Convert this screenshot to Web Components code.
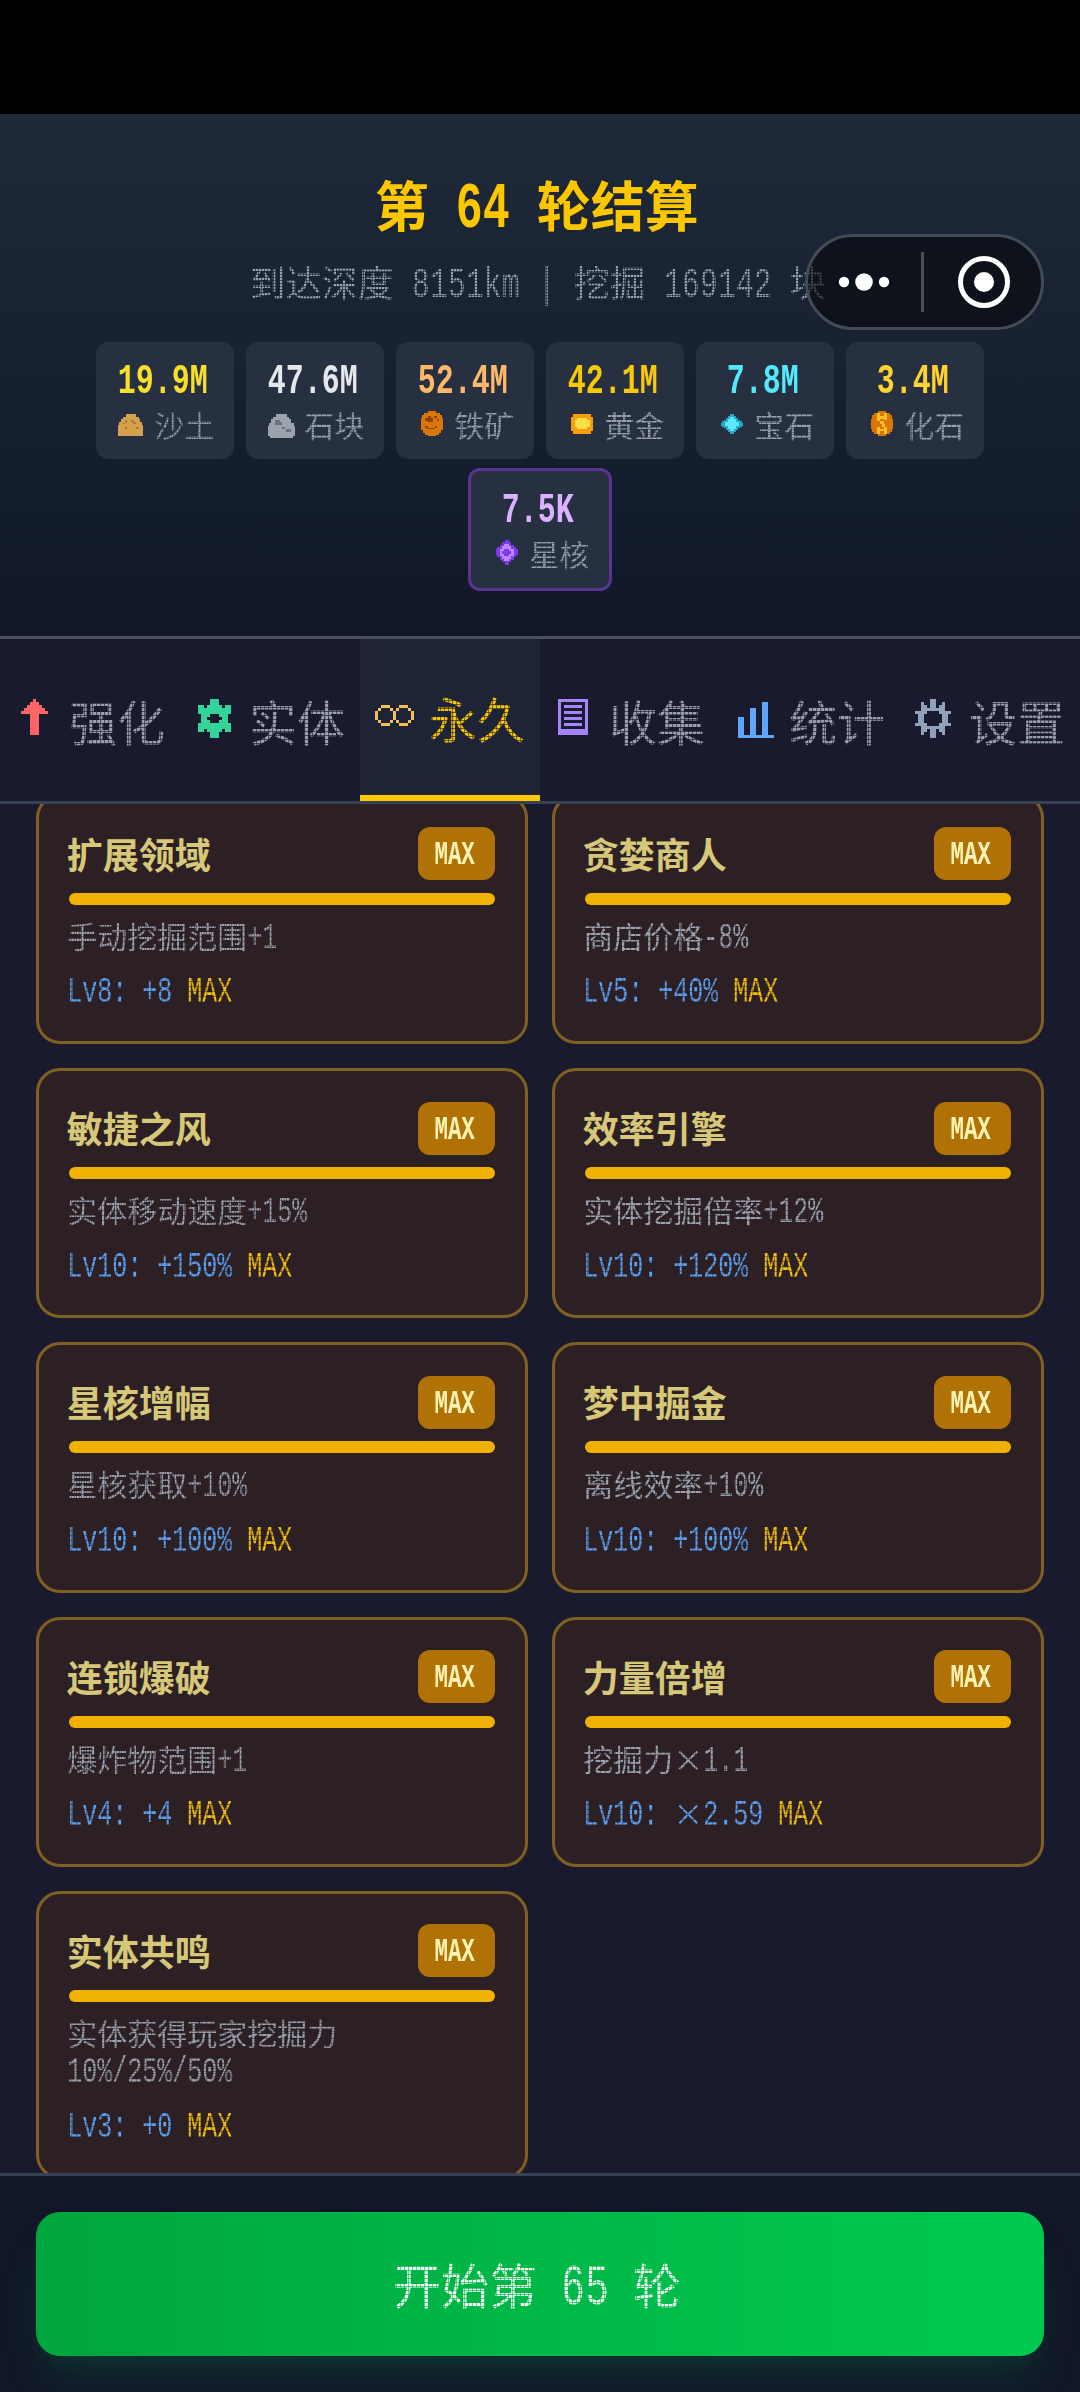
<!DOCTYPE html>
<html lang="zh-CN">
<head>
<meta charset="utf-8">
<title>第 64 轮结算</title>
<style>
html,body{margin:0;padding:0;background:#1a1a2e}
body{width:1080px;height:2392px;overflow:hidden;font-family:"Noto Sans CJK SC",sans-serif;color:#99a1af}
</style>
</head>
<body>
<game-screen></game-screen>
<script>
const define = (name, html) => customElements.define(name, class extends HTMLElement {
  connectedCallback() {
    if (this.shadowRoot) return;
    const root = this.attachShadow({ mode: 'open' });
    root.innerHTML = typeof html === 'function' ? html(this) : html;
  }
});

// Text on a 12-cell grid: Latin runs take half an em per character.
define('px-text', el => {
  const runs = el.getAttribute('text').split(/([\x21-\x7e]+(?: +[\x21-\x7e]+)*)/).filter(Boolean);
  const body = runs.map(r => /[\x21-\x7e]/.test(r)
    ? `<span class="l" style="margin-right:${-r.length * 0.1}em">${r}</span>`
    : r.replace(/ +/g, s => `<i>${s}</i>`).replace('×', '<b>×</b>')).join('');
  return `<style>
    :host{display:block}
    .w{display:block;transform:translate(-.06em,var(--dy,-1px))}
    .l{display:inline-block;font-family:"Liberation Mono",monospace;white-space:pre;line-height:1;transform:scale(.833,1.2);transform-origin:0 77%}
    i{display:inline-block;width:.5em;white-space:pre;font-style:normal}
    b{display:inline-block;width:1em;font-weight:inherit;text-align:center;line-height:1}
    :host([dots]) .w{--g:var(--gap,1px);--c:var(--cell,3px);--o:rgba(0,0,0,var(--floor,.35));
      mask-image:repeating-linear-gradient(90deg,#000 0 calc(var(--c) - var(--g)),var(--o) calc(var(--c) - var(--g)) var(--c)),repeating-linear-gradient(180deg,#000 0 calc(var(--c) - var(--g)),var(--o) calc(var(--c) - var(--g)) var(--c));
      mask-composite:intersect}
  </style><span class="w">${body}</span>`;
});

const rects = (c, list) => `<path fill="${c}" d="${list.map(([x, y, w, h]) => `M${x} ${y}h${w}v${h}h${-w}z`).join('')}"/>`;
const ICONS = {
  sand: rects('#d4a24c', [[36,12,30,8],[28,20,46,8],[20,28,59,8],[16,36,67,8],[12,44,75,34]]) +
    rects('#b07a2b', [[32,30,8,8],[52,30,8,6],[58,36,8,6],[26,38,6,5],[32,50,8,8],[66,50,8,6]]),
  stone: rects('#9ca3af', [[36,12,34,8],[26,20,50,8],[20,28,62,10],[14,38,76,10],[11,48,82,30],[18,76,68,8]]) +
    rects('#6b7280', [[32,30,16,8],[32,36,22,8],[54,50,10,7],[66,58,16,7]]),
  iron: rects('#d97706', [[41,2,26,8],[31,8,46,8],[25,16,60,9],[21,25,66,36],[27,61,54,9],[33,68,42,6],[41,74,26,5]]) +
    rects('#92400e', [[42,18,8,7],[34,25,8,7],[42,25,14,10],[60,18,8,7],[68,26,7,6],[34,48,8,5],[40,53,22,5],[62,48,8,5]]),
  gold: rects('#f59e0b', [[28,12,52,60],[21,20,67,44]]) + rects('#fde047', [[40,24,30,34],[33,30,44,22]]),
  gem: rects('#22a8c3', [[48,12,12,60],[42,18,24,48],[36,24,36,36],[30,30,48,24],[21,38,66,9],[25,34,58,17]]) + rects('#5ce8fa', [[49,21,10,42],[43,28,22,28],[34,37,40,10]]),
  fossil: rects('#d97706', [[41,2,26,77],[31,8,46,64],[25,16,60,50],[21,28,67,28]]) +
    rects('#fbbf24', [[40,10,8,20],[48,18,14,8],[60,10,8,20],[47,34,14,8],[40,26,8,8],[54,42,8,8],[40,52,8,20],[48,56,14,8],[60,52,8,20]]),
  core: rects('#7c3aed', [[47,2,12,75],[40,9,26,61],[32,17,42,46],[20,31,66,18],[25,25,56,30]]) +
    rects('#c084fc', [[46,14,14,51],[40,21,26,38],[32,29,42,22]]) + rects('#7c3aed', [[46,29,14,22],[40,36,26,9]]),
  arrow: rects('#ff6467', [[7,0,1,1],[6,1,3,1],[5,2,5,1],[4,3,7,1],[3,4,9,1],[6,5,3,7]]),
  gear: rects('#34d399', [[6,0,3,2],[2,2,2,1],[5,2,5,1],[11,2,2,1],[2,3,11,2],[3,5,3,1],[9,5,3,1],[3,6,2,1],[10,6,2,1],[3,7,3,1],[9,7,3,1],[2,8,11,2],[2,10,2,1],[5,10,5,1],[11,10,2,1],[6,11,3,2]]),
  infinity: rects('#f2bf58', [[3,3,3,1],[2,4,1,1],[6,4,1,1],[1,5,1,3],[7,5,1,3],[2,8,1,1],[6,8,1,1],[3,9,3,1],[9,3,3,1],[8,4,1,1],[12,4,1,1],[13,5,1,3],[8,8,1,1],[12,8,1,1],[9,9,3,1]]),
  doc: rects('#a684ff', [[2,0,10,1],[2,1,1,9],[11,1,1,9],[2,10,10,2],[4,2,6,1],[4,4,6,1],[4,6,6,1],[4,8,6,1]]),
  bars: rects('#60a5fa', [[2,6,2,6],[6,3,2,9],[10,1,2,11],[2,12,12,1]]),
  cog: rects('#90a1b9', [[6,0,2,3],[3,1,1,2],[10,1,1,2],[4,2,1,1],[9,2,1,1],[5,3,4,1],[3,3,2,2],[9,3,2,2],[1,4,3,1],[10,4,3,1],[2,5,2,3],[10,5,2,3],[1,8,3,1],[10,8,3,1],[3,8,2,2],[9,8,2,2],[5,9,4,1],[4,10,1,1],[9,10,1,1],[3,10,1,2],[10,10,1,2],[6,10,2,3]])
};
define('px-icon', el => {
  const small = el.hasAttribute('small');
  return `<style>:host{display:block;flex:none;width:${small ? 30 : 48}px;height:${small ? 30 : 48}px}svg{display:block;overflow:visible}</style>
  <svg width="100%" height="100%" viewBox="0 0 ${small ? '90 90' : '16 16'}" shape-rendering="crispEdges">${ICONS[el.getAttribute('name')]}</svg>`;
});

define('resource-chip', el => `<style>
  :host{display:block;box-sizing:border-box;width:138px;height:117px;padding:10px 18px 14px;border-radius:12px;background:#263040;text-align:center}
  :host([rare]){width:144px;height:123px;border:3px solid #593491}
  .v{font-size:36px;font-weight:700;line-height:54px;height:54px;--dy:-2px;color:${el.getAttribute('color')}}
  .r{display:flex;gap:12px;align-items:center;height:39px;font-size:30px;line-height:39px;--cell:2.5px;--gap:.7px;--floor:.55}
  .r px-text{white-space:nowrap}
  px-icon{margin-top:-1px}
  </style><px-text class="v" text="${el.getAttribute('value')}"></px-text>
  <div class="r"><px-icon small name="${el.getAttribute('icon')}"></px-icon><px-text dots text="${el.getAttribute('label')}"></px-text></div>`);

define('mini-capsule', `<style>
  :host{display:flex;box-sizing:border-box;width:239px;height:96px;border:3px solid #454b56;border-radius:48px;background:rgba(5,7,12,.6);align-items:center}
  svg{display:block}
  </style><svg width="233" height="90" viewBox="0 0 233 90"><g fill="#fff"><circle cx="36" cy="45" r="5.2"/><circle cx="56" cy="45" r="8.8"/><circle cx="76" cy="45" r="5.2"/><circle cx="176" cy="45" r="10"/></g><path d="M114.500 15v60" stroke="#4a4e56" stroke-width="3"/><circle cx="176" cy="45" r="23.500" fill="none" stroke="#fff" stroke-width="5"/></svg>`);

define('round-header', `<style>
  :host{display:block;position:relative;box-sizing:border-box;height:525px;padding-top:48px;background:linear-gradient(#1e2939,#101828);border-bottom:3px solid #4a4f62;text-align:center}
  .t{height:81px;font-size:54px;font-weight:700;line-height:81px;color:#fdc700;--dy:1px}
  .s{height:54px;margin-top:12px;font-size:36px;line-height:54px;color:#99a1af;--cell:3px}
  .c{display:flex;flex-wrap:wrap;justify-content:center;gap:9px 12px;margin:33px 60px 0}
  mini-capsule{position:absolute;left:805px;top:120px}
  </style><px-text class="t" text="第 64 轮结算"></px-text><px-text class="s" dots text="到达深度 8151km | 挖掘 169142 块"></px-text>
  <div class="c">
  <resource-chip value="19.9M" color="#f7df2b" icon="sand" label="沙土"></resource-chip>
  <resource-chip value="47.6M" color="#e5e7eb" icon="stone" label="石块"></resource-chip>
  <resource-chip value="52.4M" color="#ffb86a" icon="iron" label="铁矿"></resource-chip>
  <resource-chip value="42.1M" color="#f8c80b" icon="gold" label="黄金"></resource-chip>
  <resource-chip value="7.8M" color="#53eafd" icon="gem" label="宝石"></resource-chip>
  <resource-chip value="3.4M" color="#ffd230" icon="fossil" label="化石"></resource-chip>
  <resource-chip rare value="7.5K" color="#dab2ff" icon="core" label="星核"></resource-chip>
  </div><mini-capsule></mini-capsule>`);

define('nav-tab', el => `<style>
  :host{display:flex;box-sizing:border-box;width:180px;height:162px;padding:0 12px;gap:12px;align-items:center;border-bottom:0 solid #fdc700;font-size:48px;line-height:72px;color:#99a1af;--cell:4px;--dy:0px}
  :host([active]){background:#1e2335;border-bottom-width:6px;color:#fdc700}
  px-icon{margin-top:6px}
  px-text{white-space:nowrap}
  </style><px-icon name="${el.getAttribute('icon')}"></px-icon><px-text dots text="${el.getAttribute('label')}"></px-text>`);

define('tab-bar', `<style>:host{display:flex;border-bottom:3px solid #364153;background:#1a1a2e}</style>
  <nav-tab icon="arrow" label="强化"></nav-tab><nav-tab icon="gear" label="实体"></nav-tab><nav-tab active icon="infinity" label="永久"></nav-tab><nav-tab icon="doc" label="收集"></nav-tab><nav-tab icon="bars" label="统计"></nav-tab><nav-tab icon="cog" label="设置"></nav-tab>`);

define('upgrade-card', el => {
  const lines = el.getAttribute('desc').length > 16 ? 2 : 1;
  return `<style>
  :host{display:block;box-sizing:border-box;height:${212.83 + 37.5 * lines}px;padding:30px;border:3px solid #806020;border-radius:24px;background:#2c2024}
  .h{display:flex;justify-content:space-between;align-items:center;height:54px}
  .n{height:54px;font-size:36px;font-weight:700;line-height:54px;color:#d6c878}
  .b{box-sizing:border-box;height:53px;padding:6px 18px;border-radius:12px;background:#b07205;color:#fef3b5;font-size:27px;font-weight:700;line-height:38px;--dy:1px}
  .p{height:12px;margin:12px 0;border-radius:6px;background:#f0b100}
  .d{height:${37.5 * lines}px;font-size:30px;line-height:37.500px;color:#99a1af;--cell:2.5px;--gap:.7px;--floor:.55;--dy:0px}
  .l{display:flex;gap:15px;height:45px;margin-top:12px;font-size:30px;line-height:45px;color:#5a9ff0;--cell:2.5px;--gap:.7px;--floor:.55;--dy:1px}
  .m{color:#f0bd10}
  </style><div class="h"><px-text class="n" text="${el.getAttribute('name')}"></px-text><px-text class="b" text="MAX"></px-text></div>
  <div class="p"></div><px-text class="d" dots text="${el.getAttribute('desc')}"></px-text>
  <div class="l"><px-text dots text="${el.getAttribute('level')}"></px-text><px-text class="m" dots text="MAX"></px-text></div>`;
});

define('upgrade-list', `<style>
  :host{display:block;height:1369px;overflow:hidden}
  .g{display:grid;grid-template-columns:492px 492px;gap:24px;padding:0 36px;margin-top:-10.330px}
  </style><div class="g">${[
  ['扩展领域','手动挖掘范围+1','Lv8: +8'],['贪婪商人','商店价格-8%','Lv5: +40%'],
  ['敏捷之风','实体移动速度+15%','Lv10: +150%'],['效率引擎','实体挖掘倍率+12%','Lv10: +120%'],
  ['星核增幅','星核获取+10%','Lv10: +100%'],['梦中掘金','离线效率+10%','Lv10: +100%'],
  ['连锁爆破','爆炸物范围+1','Lv4: +4'],['力量倍增','挖掘力×1.1','Lv10: ×2.59'],
  ['实体共鸣','实体获得玩家挖掘力 10%/25%/50%','Lv3: +0']
  ].map(([n,d,l]) => `<upgrade-card name="${n}" desc="${d}" level="${l}"></upgrade-card>`).join('')}</div>`);

define('start-footer', `<style>
  :host{display:block;box-sizing:border-box;height:219px;padding:36px;border-top:3px solid #364153;background:#111729;overflow:hidden}
  button{display:flex;width:1008px;height:144px;padding:0;border:0;border-radius:24px;align-items:center;justify-content:center;background:linear-gradient(90deg,#00a63e,#00c950);box-shadow:0 30px 45px -9px rgba(0,201,80,.12),0 12px 18px -6px rgba(0,201,80,.08);font:48px/72px "Noto Sans CJK SC",sans-serif;color:#f4fff8;--cell:4px}
  </style><button><px-text dots text="开始第 65 轮"></px-text></button>`);

define('game-screen', `<style>:host{display:flex;flex-direction:column;width:1080px;height:2392px;overflow:hidden;background:#1a1a2e}.k{height:114px;background:#000}</style>
  <div class="k"></div><round-header></round-header><tab-bar></tab-bar><upgrade-list></upgrade-list><start-footer></start-footer>`);
</script>
</body>
</html>
